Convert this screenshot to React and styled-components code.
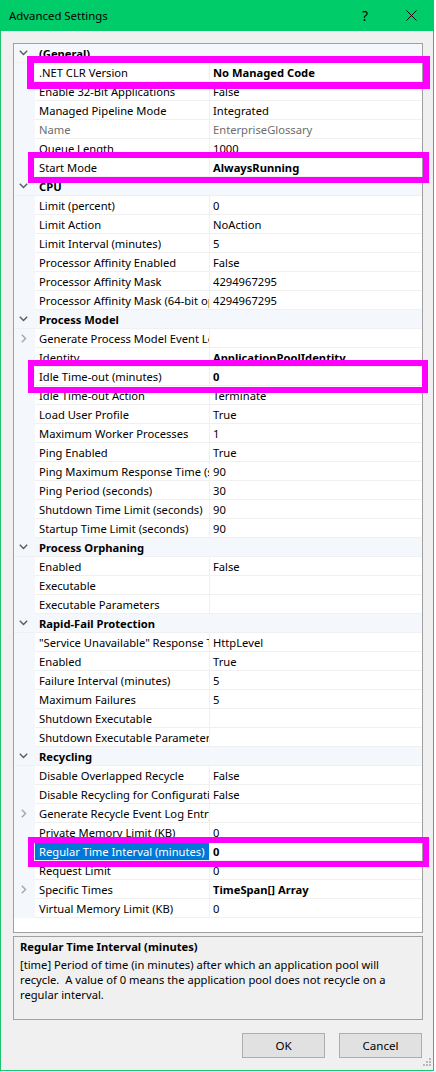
import React from 'react';
import styled, { createGlobalStyle } from 'styled-components';

const Global = createGlobalStyle`
  html, body {
    margin: 0;
    padding: 0;
    background: #ffffff;
  }
  body {
    font-family: "Noto Sans", "Segoe UI", Arial, sans-serif;
    font-size: 11.2px;
    color: #000;
  }
  * { box-sizing: border-box; }
`;

const sections = [
  {
    title: '(General)',
    rows: [
      { name: '.NET CLR Version', value: 'No Managed Code', bold: true },
      { name: 'Enable 32-Bit Applications', value: 'False' },
      { name: 'Managed Pipeline Mode', value: 'Integrated' },
      { name: 'Name', value: 'EnterpriseGlossary', disabled: true },
      { name: 'Queue Length', value: '1000' },
      { name: 'Start Mode', value: 'AlwaysRunning', bold: true },
    ],
  },
  {
    title: 'CPU',
    rows: [
      { name: 'Limit (percent)', value: '0' },
      { name: 'Limit Action', value: 'NoAction' },
      { name: 'Limit Interval (minutes)', value: '5' },
      { name: 'Processor Affinity Enabled', value: 'False' },
      { name: 'Processor Affinity Mask', value: '4294967295' },
      { name: 'Processor Affinity Mask (64-bit option)', value: '4294967295' },
    ],
  },
  {
    title: 'Process Model',
    rows: [
      { name: 'Generate Process Model Event Log Entry', value: '', expandable: true },
      { name: 'Identity', value: 'ApplicationPoolIdentity', bold: true },
      { name: 'Idle Time-out (minutes)', value: '0', bold: true },
      { name: 'Idle Time-out Action', value: 'Terminate' },
      { name: 'Load User Profile', value: 'True' },
      { name: 'Maximum Worker Processes', value: '1' },
      { name: 'Ping Enabled', value: 'True' },
      { name: 'Ping Maximum Response Time (seconds)', value: '90' },
      { name: 'Ping Period (seconds)', value: '30' },
      { name: 'Shutdown Time Limit (seconds)', value: '90' },
      { name: 'Startup Time Limit (seconds)', value: '90' },
    ],
  },
  {
    title: 'Process Orphaning',
    rows: [
      { name: 'Enabled', value: 'False' },
      { name: 'Executable', value: '' },
      { name: 'Executable Parameters', value: '' },
    ],
  },
  {
    title: 'Rapid-Fail Protection',
    rows: [
      { name: '"Service Unavailable" Response Type', value: 'HttpLevel' },
      { name: 'Enabled', value: 'True' },
      { name: 'Failure Interval (minutes)', value: '5' },
      { name: 'Maximum Failures', value: '5' },
      { name: 'Shutdown Executable', value: '' },
      { name: 'Shutdown Executable Parameters', value: '' },
    ],
  },
  {
    title: 'Recycling',
    rows: [
      { name: 'Disable Overlapped Recycle', value: 'False' },
      { name: 'Disable Recycling for Configuration Changes', value: 'False' },
      { name: 'Generate Recycle Event Log Entry', value: '', expandable: true },
      { name: 'Private Memory Limit (KB)', value: '0' },
      { name: 'Regular Time Interval (minutes)', value: '0', bold: true, selected: true },
      { name: 'Request Limit', value: '0' },
      { name: 'Specific Times', value: 'TimeSpan[] Array', bold: true, expandable: true },
      { name: 'Virtual Memory Limit (KB)', value: '0' },
    ],
  },
];

// highlight frames drawn over the property grid
const marks = [
  { x: 27, y: 56, w: 403, h: 33, b: 7 },
  { x: 28, y: 152, w: 401, h: 31, b: 6 },
  { x: 28, y: 360, w: 400, h: 33, b: 6 },
  { x: 28, y: 837, w: 401, h: 30, b: 6 },
];

const Window = styled.div`
  position: relative;
  width: 434px;
  height: 1071px;
  display: flex;
  flex-direction: column;
  background: #f0f0f0;
`;

const TitleBar = styled.div`
  height: 31px;
  flex-shrink: 0;
  display: flex;
  align-items: center;
  background: #00cc6a;
  padding-left: 9px;
`;

const TitleText = styled.div`
  flex: 1;
  font-size: 11.4px;
  color: #000;
`;

const CaptionButton = styled.div`
  width: 46px;
  height: 31px;
  display: flex;
  align-items: center;
  justify-content: center;
  font-size: 14px;
  color: #000;
`;

const Body = styled.div`
  position: relative;
  flex: 1;
  display: flex;
  flex-direction: column;
  border: 1px solid #1ec46e;
  border-top: none;
  padding: 12px 10px 0 12px;
`;

const Grid = styled.div`
  height: 890px;
  flex-shrink: 0;
  border: 1px solid #a0a0a0;
  background: #ffffff;
  overflow: hidden;
`;

const CategoryRow = styled.div`
  height: 19px;
  display: flex;
  align-items: center;
  background: #f4f7fc;
  border-bottom: 1px solid #f0f0f0;
`;

const Gutter = styled.div`
  width: 21px;
  align-self: stretch;
  flex-shrink: 0;
  display: flex;
  align-items: center;
  padding-left: ${(p) => p.$indent}px;
  background: #f4f7fc;
`;

const CategoryTitle = styled.div`
  padding-left: 4px;
  font-weight: 700;
  white-space: nowrap;
`;

const PropRow = styled.div`
  height: 19px;
  display: flex;
`;

const NameCell = styled.div`
  width: 175px;
  flex-shrink: 0;
  padding-left: 4px;
  display: flex;
  align-items: center;
  overflow: hidden;
  white-space: nowrap;
  border-right: 1px solid #f0f0f0;
  border-bottom: 1px solid #f0f0f0;
  background: ${(p) => (p.$selected ? '#0078d7' : '#ffffff')};
  color: ${(p) => (p.$selected ? '#ffffff' : p.$disabled ? '#6d6d6d' : '#000000')};
`;

const ValueCell = styled.div`
  flex: 1;
  padding-left: 3px;
  display: flex;
  align-items: center;
  overflow: hidden;
  white-space: nowrap;
  border-bottom: 1px solid #f0f0f0;
  font-weight: ${(p) => (p.$bold ? 700 : 400)};
  color: ${(p) => (p.$disabled ? '#6d6d6d' : '#000000')};
`;

const Description = styled.div`
  margin-top: 3px;
  height: 84px;
  flex-shrink: 0;
  border: 1px solid #a0a0a0;
  background: #f0f0f0;
  padding: 2px 6px 0 6px;
  line-height: 15px;
`;

const DescTitle = styled.div`
  font-weight: 700;
  margin-bottom: 3px;
`;

const DescLine = styled.div`
  white-space: pre;
`;

const ButtonRow = styled.div`
  margin-top: 13px;
  display: flex;
  justify-content: flex-end;
  gap: 14px;
  padding-right: 1px;
`;

const Button = styled.div`
  width: 83px;
  height: 25px;
  display: flex;
  align-items: center;
  justify-content: center;
  background: #e1e1e1;
  border: 1px solid #adadad;
  font-size: 11.6px;
`;

const Grip = styled.svg`
  position: absolute;
  right: 1px;
  bottom: 1px;
`;

const Mark = styled.div`
  position: absolute;
  border-style: solid;
  border-color: #ff00ff;
  pointer-events: none;
`;

const ChevronDown = () => (
  <svg width="9" height="6" viewBox="0 0 9 6">
    <path d="M0.8 0.8 L4.5 4.5 L8.2 0.8" fill="none" stroke="#5b5b5b" strokeWidth="1.4" />
  </svg>
);

const ChevronRight = () => (
  <svg width="6" height="9" viewBox="0 0 6 9">
    <path d="M0.8 0.8 L4.5 4.5 L0.8 8.2" fill="none" stroke="#a6a6a6" strokeWidth="1.4" />
  </svg>
);

const CloseIcon = () => (
  <svg width="11" height="11" viewBox="0 0 11 11">
    <path d="M0.5 0.5 L10.5 10.5 M10.5 0.5 L0.5 10.5" stroke="#000" strokeWidth="1" />
  </svg>
);

export default function App() {
  return (
    <>
      <Global />
      <Window>
        <TitleBar>
          <TitleText>Advanced Settings</TitleText>
          <CaptionButton>?</CaptionButton>
          <CaptionButton>
            <CloseIcon />
          </CaptionButton>
        </TitleBar>
        <Body>
          <Grid>
            {sections.map((s) => (
              <React.Fragment key={s.title}>
                <CategoryRow>
                  <Gutter $indent={5}>
                    <ChevronDown />
                  </Gutter>
                  <CategoryTitle>{s.title}</CategoryTitle>
                </CategoryRow>
                {s.rows.map((r) => (
                  <PropRow key={s.title + r.name}>
                    <Gutter $indent={7}>{r.expandable && <ChevronRight />}</Gutter>
                    <NameCell $selected={r.selected} $disabled={r.disabled}>
                      {r.name}
                    </NameCell>
                    <ValueCell $bold={r.bold} $disabled={r.disabled}>
                      {r.value}
                    </ValueCell>
                  </PropRow>
                ))}
              </React.Fragment>
            ))}
          </Grid>
          <Description>
            <DescTitle>Regular Time Interval (minutes)</DescTitle>
            <DescLine>[time] Period of time (in minutes) after which an application pool will</DescLine>
            <DescLine>recycle.  A value of 0 means the application pool does not recycle on a</DescLine>
            <DescLine>regular interval.</DescLine>
          </Description>
          <ButtonRow>
            <Button>OK</Button>
            <Button>Cancel</Button>
          </ButtonRow>
          <Grip width="11" height="11" viewBox="0 0 11 11">
            <rect x="8" y="0" width="2" height="2" fill="#b9b9b9" />
            <rect x="5" y="3" width="2" height="2" fill="#b9b9b9" />
            <rect x="8" y="3" width="2" height="2" fill="#b9b9b9" />
            <rect x="2" y="6" width="2" height="2" fill="#b9b9b9" />
            <rect x="5" y="6" width="2" height="2" fill="#b9b9b9" />
            <rect x="8" y="6" width="2" height="2" fill="#b9b9b9" />
          </Grip>
        </Body>
        {marks.map((m, i) => (
          <Mark
            key={i}
            style={{ left: m.x, top: m.y, width: m.w, height: m.h, borderWidth: m.b }}
          />
        ))}
      </Window>
    </>
  );
}
